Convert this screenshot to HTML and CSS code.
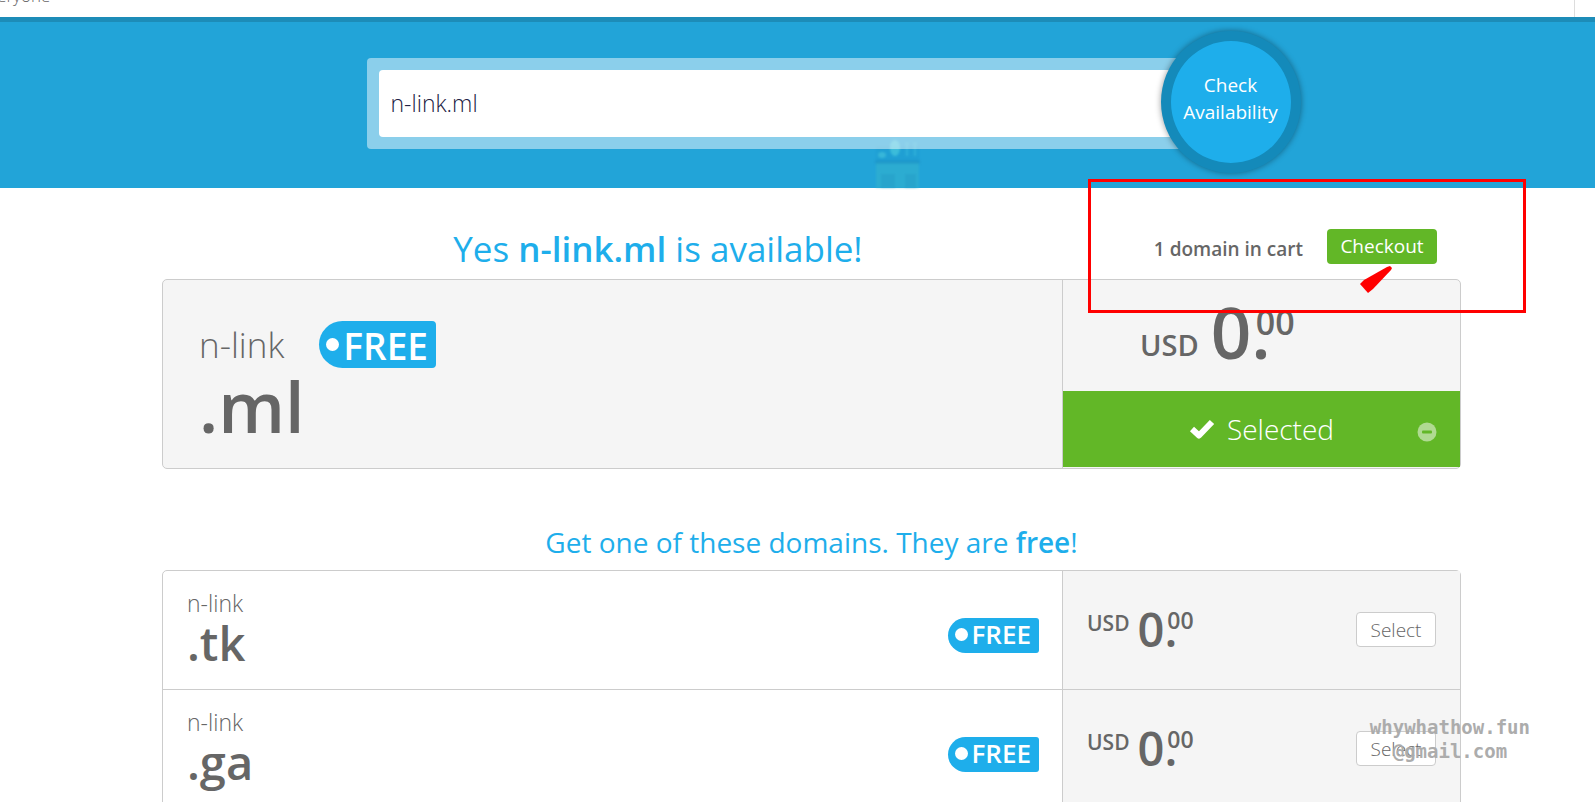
FILE: index.html
```html
<!DOCTYPE html>
<html lang="en">
<head>
    <meta charset="utf-8">
    <title>Domain availability</title>
    <link rel="stylesheet" href="styles.css">
</head>
<body>
<header class="topbar">
    <span class="tagline">everyone</span>
    <span class="topbar-divider"></span>
</header>

<section class="hero">
    <svg class="tower" width="46" height="50" viewBox="0 0 46 50" aria-hidden="true">
        <path d="M2 24h43v26H2z" fill="#3bb8c8" opacity=".4"/>
        <path d="M2 8h43v16H2z" fill="#1c98cc" opacity=".4"/>
        <path d="M1 22h45v4H1z" fill="#1a8fc4" opacity=".5"/>
        <path d="M7 50V36h14v14M31 50V36h11v14" fill="#2294c0" opacity=".35"/>
        <ellipse cx="21" cy="10" rx="5" ry="8" fill="#4fd0e0" opacity=".6"/>
        <ellipse cx="8" cy="17" rx="4" ry="3" fill="#4fd0e0" opacity=".5"/>
        <path d="M33 4v14M41 4v14" stroke="#4fd0e0" stroke-width="3" opacity=".25"/>
    </svg>
    <form class="search">
        <div class="search-box">
            <input class="search-input" type="text" value="n-link.ml" aria-label="Domain name">
        </div>
        <button class="search-btn" type="button">Check<br>Availability</button>
    </form>
</section>

<main class="content">
    <div class="result-head">
        <h1 class="result-title">Yes <b>n-link.ml</b> is available!</h1>
        <div class="cart">
            <span class="cart-count">1 domain in cart</span>
            <button class="btn-checkout" type="button">Checkout</button>
            <div class="mark-box"></div>
            <svg class="mark-arrow" width="34" height="30" viewBox="0 0 34 30" aria-hidden="true">
                <path d="M0 18L4 14L27 1L30 0L32 2L31 4L13 23L8 27Z" fill="#f00"/>
            </svg>
        </div>
    </div>

    <section class="selected">
        <div class="selected-domain">
            <div class="selected-line">
                <span class="selected-name">n-link</span>
                <span class="tag tag-lg">FREE</span>
            </div>
            <div class="selected-ext">.ml</div>
        </div>
        <div class="selected-side">
            <div class="price price-lg">
                <span class="currency">USD</span>
                <span class="amount">0.</span><span class="cents">00</span>
            </div>
            <button class="btn-selected" type="button">
                <svg class="check" width="26" height="20" viewBox="0 0 26 20" aria-hidden="true">
                    <path d="M3 10L10 16.500L23 3" fill="none" stroke="#fff" stroke-width="6" stroke-linejoin="round"/>
                </svg>
                <span>Selected</span>
                <svg class="minus" width="20" height="20" viewBox="0 0 20 20" aria-hidden="true">
                    <circle cx="10" cy="10" r="9.500" fill="#b0da92"/>
                    <rect x="5" y="8.500" width="10" height="3" rx="1" fill="#62b727"/>
                </svg>
            </button>
        </div>
    </section>

    <h2 class="list-title">Get one of these domains. They are <b>free</b>!</h2>
    <ul class="domains">
        <li class="domain">
            <div class="domain-info">
                <div>
                    <div class="domain-name">n-link</div>
                    <div class="domain-ext">.tk</div>
                </div>
                <span class="tag">FREE</span>
            </div>
            <div class="domain-side">
                <div class="price">
                    <span class="currency">USD</span>
                    <span class="amount">0.</span><span class="cents">00</span>
                </div>
                <button class="btn-select" type="button">Select</button>
            </div>
        </li>
        <li class="domain">
            <div class="domain-info">
                <div>
                    <div class="domain-name">n-link</div>
                    <div class="domain-ext">.ga</div>
                </div>
                <span class="tag">FREE</span>
            </div>
            <div class="domain-side">
                <div class="price">
                    <span class="currency">USD</span>
                    <span class="amount">0.</span><span class="cents">00</span>
                </div>
                <button class="btn-select" type="button">Select</button>
            </div>
        </li>
    </ul>
</main>

<div class="watermark">whywhathow.fun<br>@gmail.com</div>
</body>
</html>
```
FILE: styles.css
```css
* {
    box-sizing: border-box;
}

body {
    margin: 0;
    height: 100vh;
    overflow: hidden;
    position: relative;
    background: #fff;
    color: #666;
    font-family: "Open Sans", sans-serif;
}

button, input {
    font-family: inherit;
}

b {
    font-weight: 600;
}

/* top bar */
.topbar {
    display: flex;
    justify-content: space-between;
    height: 17px;
    padding-right: 20px;
    overflow: hidden;
}

.tagline {
    margin: -16px 0 0 -20px;
    font-size: 17px;
    font-weight: 300;
    line-height: 24px;
}

.topbar-divider {
    width: 1px;
    background: #ddd;
}

/* search */
.hero {
    position: relative;
    height: 171px;
    padding: 36px 0 0 28px;
    border-top: 5px solid #1d8cb8;
    background: #22a4d8;
}

.tower {
    position: absolute;
    bottom: 0;
    left: 874px;
    filter: blur(1px);
}

.search {
    position: relative;
    max-width: 890px;
    margin: 0 auto;
}

.search-box {
    padding: 12px;
    border-radius: 4px;
    background: rgba(255, 255, 255, .48);
}

.search-input {
    display: block;
    width: 100%;
    height: 67px;
    padding: 0 12px 2px;
    border: 0;
    border-radius: 4px;
    background: #fff;
    color: #224;
    font-size: 23px;
    font-weight: 300;
}

.search-btn {
    position: absolute;
    top: -27px;
    right: -44px;
    width: 140px;
    height: 142px;
    padding: 0 0 6px;
    border: 10px solid #148aba;
    border-radius: 50%;
    background: #1eaeeb;
    box-shadow: 0 0 6px rgba(0, 0, 0, .4);
    color: #fff;
    font-size: 19px;
    line-height: 27px;
    white-space: nowrap;
}

/* content */
.content {
    max-width: 1327px;
    margin: 0 auto;
    padding-left: 28px;
}

.result-head {
    display: flex;
    align-items: flex-end;
    height: 91px;
    padding: 0 24px 15px 0;
}

.result-title {
    flex: 1;
    margin: 0;
    color: #1eaeeb;
    font-size: 35px;
    font-weight: 400;
    line-height: 30px;
    text-align: center;
}

.cart {
    position: relative;
    display: flex;
    align-items: center;
    gap: 24px;
}

.cart-count {
    padding-top: 4px;
    font-size: 19px;
    font-weight: 600;
}

.btn-checkout {
    width: 110px;
    height: 35px;
    padding: 0 0 2px;
    border: 0;
    border-radius: 4px;
    background: #62b727;
    color: #fff;
    font-size: 19px;
}

.selected {
    display: flex;
    height: 190px;
    border: 1px solid #ccc;
    border-radius: 5px;
    background: #f5f5f5;
}

.selected-domain {
    flex: 1;
    padding: 41px 36px 0;
}

.selected-line {
    display: flex;
    gap: 35px;
    height: 48px;
}

.selected-name {
    font-size: 35px;
    font-weight: 300;
    line-height: 47px;
}

.selected-ext {
    font-size: 70px;
    font-weight: 600;
    line-height: 75px;
}

.selected-side, .domain-side {
    width: 398px;
    border-left: 1px solid #ccc;
}

.selected-side {
    display: flex;
    flex-direction: column;
}

/* price tag */
.tag {
    position: relative;
    height: 35px;
    padding: 0 8px 0 24px;
    border-radius: 18px 3px 3px 18px;
    background: #1eaeeb;
    color: #fff;
    font-size: 26px;
    font-weight: 600;
    line-height: 33px;
}

.tag::before {
    content: "";
    position: absolute;
    top: 50%;
    left: 7px;
    width: 13px;
    height: 13px;
    margin-top: -7px;
    border-radius: 50%;
    background: #fff;
}

.tag-lg {
    height: 47px;
    border-radius: 24px 4px 4px 24px;
    font-size: 37px;
    line-height: 49px;
}

/* prices */
.price {
    display: flex;
    font-weight: 600;
}

.currency {
    font-size: 21px;
    line-height: 26px;
}

.amount {
    margin-left: 8px;
    font-size: 47px;
    line-height: 38px;
}

.cents {
    margin-left: -10px;
    font-size: 23px;
    line-height: 21px;
}

.price-lg {
    height: 111px;
    padding: 25px 0 0 77px;
}

.price-lg .currency {
    font-size: 29px;
    line-height: 80px;
}

.price-lg .amount {
    margin-left: 12px;
    font-size: 71px;
    line-height: 54px;
}

.price-lg .cents {
    margin-left: -15px;
    font-size: 34px;
    line-height: 34px;
}

.btn-selected {
    position: relative;
    display: flex;
    align-items: center;
    justify-content: center;
    gap: 12px;
    height: 76px;
    border: 0;
    background: #62b727;
    color: #fff;
    font-size: 28px;
    font-weight: 300;
}

.minus {
    position: absolute;
    right: 23px;
    bottom: 25px;
}

/* free domains */
.list-title {
    margin: 52px 0 7px;
    color: #1eaeeb;
    font-size: 28px;
    font-weight: 400;
    line-height: 42px;
    text-align: center;
}

.domains {
    margin: 0;
    padding: 0;
    list-style: none;
    border: 1px solid #ccc;
    border-radius: 5px;
}

.domain {
    display: flex;
    height: 118px;
}

.domain + .domain {
    border-top: 1px solid #ccc;
    height: 119px;
}

.domain-info {
    display: flex;
    flex: 1;
    align-items: center;
    justify-content: space-between;
    padding: 10px 23px 0 24px;
}

.domain-info > div {
    align-self: flex-start;
}

.domain-name {
    font-size: 23px;
    font-weight: 300;
    line-height: 44px;
}

.domain-ext {
    font-size: 47px;
    font-weight: 600;
    line-height: 36px;
}

.domain-side {
    display: flex;
    justify-content: space-between;
    padding: 39px 24px 0;
    background: #f5f5f5;
}

.btn-select {
    width: 80px;
    height: 35px;
    margin-top: 2px;
    padding: 0;
    border: 1px solid #ccc;
    border-radius: 4px;
    background: #fff;
    color: #666;
    font-size: 19px;
    font-weight: 300;
}

/* notes drawn over the page */
.mark-box {
    position: absolute;
    top: -50px;
    right: -89px;
    width: 438px;
    height: 134px;
    border: 3px solid #f00;
}

.mark-arrow {
    position: absolute;
    top: 37px;
    right: 43px;
}

.watermark {
    position: absolute;
    right: 65px;
    bottom: 39px;
    color: #acacac;
    font-family: "DejaVu Sans Mono", monospace;
    font-size: 19px;
    font-weight: 700;
    line-height: 24px;
    text-align: center;
}
```
